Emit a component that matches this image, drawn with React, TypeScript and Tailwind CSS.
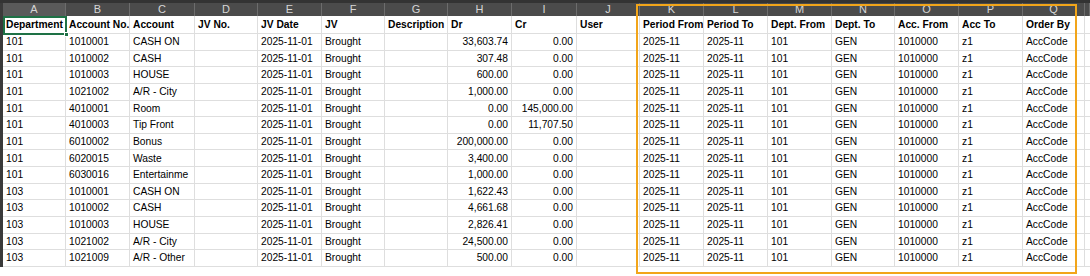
import React from 'react';

const LETTERS = ['A', 'B', 'C', 'D', 'E', 'F', 'G', 'H', 'I', 'J', 'K', 'L', 'M', 'N', 'O', 'P', 'Q', ''];

const HEADERS = [
  'Department',
  'Account No.',
  'Account',
  'JV No.',
  'JV Date',
  'JV',
  'Description',
  'Dr',
  'Cr',
  'User',
  'Period From',
  'Period To',
  'Dept. From',
  'Dept. To',
  'Acc. From',
  'Acc To',
  'Order By',
  '',
];

// dept, acc no, account, dr, cr
const ROWS: [string, string, string, string, string][] = [
  ['101', '1010001', 'CASH ON', '33,603.74', '0.00'],
  ['101', '1010002', 'CASH', '307.48', '0.00'],
  ['101', '1010003', 'HOUSE', '600.00', '0.00'],
  ['101', '1021002', 'A/R - City', '1,000.00', '0.00'],
  ['101', '4010001', 'Room', '0.00', '145,000.00'],
  ['101', '4010003', 'Tip Front', '0.00', '11,707.50'],
  ['101', '6010002', 'Bonus', '200,000.00', '0.00'],
  ['101', '6020015', 'Waste', '3,400.00', '0.00'],
  ['101', '6030016', 'Entertainme', '1,000.00', '0.00'],
  ['103', '1010001', 'CASH ON', '1,622.43', '0.00'],
  ['103', '1010002', 'CASH', '4,661.68', '0.00'],
  ['103', '1010003', 'HOUSE', '2,826.41', '0.00'],
  ['103', '1021002', 'A/R - City', '24,500.00', '0.00'],
  ['103', '1021009', 'A/R - Other', '500.00', '0.00'],
];

const COLS =
  'grid grid-cols-[63px_64px_65px_63px_64px_63px_63px_64px_65px_63px_64px_64px_64px_63px_64px_64px_62px_5px]';

function Cell({ children, right }: { children?: React.ReactNode; right?: boolean }) {
  return (
    <div
      className={`flex items-center overflow-hidden whitespace-nowrap border-r border-b border-[#dedede] px-[3px] ${
        right ? 'justify-end' : ''
      }`}
    >
      {children}
    </div>
  );
}

export default function App() {
  return (
    <div className="relative h-[276px] w-[1090px] overflow-hidden bg-white font-['Liberation_Sans',Arial,sans-serif] text-[10.25px] text-black">
      {/* top dark strip */}
      <div className="h-[3px] bg-[#333333]" />

      <div className="flex">
        {/* row header column, mostly cut off */}
        <div className="h-[264px] w-[3px] bg-[#3a3a3a]" />

        <div className="flex-1">
          {/* column letters */}
          <div className={`${COLS} h-[13px] bg-[#4b4b4b] text-[11px] text-[#d6d6d6]`}>
            {LETTERS.map((l, i) => (
              <div
                key={i}
                className={`flex items-center justify-center border-r border-[#6c6c6c] leading-none ${
                  i === 0 ? 'bg-[#5a5a5a]' : ''
                }`}
              >
                {l}
              </div>
            ))}
          </div>

          {/* header row */}
          <div className={`${COLS} h-[18px] font-bold`}>
            {HEADERS.map((h, i) => (
              <Cell key={i}>{h}</Cell>
            ))}
          </div>

          {ROWS.map((r, i) => (
            <div key={i} className={`${COLS} h-[16.64px]`}>
              <Cell>{r[0]}</Cell>
              <Cell>{r[1]}</Cell>
              <Cell>{r[2]}</Cell>
              <Cell />
              <Cell>2025-11-01</Cell>
              <Cell>Brought</Cell>
              <Cell />
              <Cell right>{r[3]}</Cell>
              <Cell right>{r[4]}</Cell>
              <Cell />
              <Cell>2025-11</Cell>
              <Cell>2025-11</Cell>
              <Cell>101</Cell>
              <Cell>GEN</Cell>
              <Cell>1010000</Cell>
              <Cell>z1</Cell>
              <Cell>AccCode</Cell>
              <Cell />
            </div>
          ))}
        </div>
      </div>

      {/* active cell A1 selection */}
      <div className="absolute left-[3px] top-[16px] h-[19px] w-[64px] border-2 border-[#1e7145]" />
      <div className="absolute left-[64px] top-[32px] h-[5px] w-[5px] border border-white bg-[#1e7145]" />

      {/* orange highlight box */}
      <div className="absolute left-[636px] top-[4px] h-[270px] w-[441px] border-2 border-[#f2a51a]" />
    </div>
  );
}
